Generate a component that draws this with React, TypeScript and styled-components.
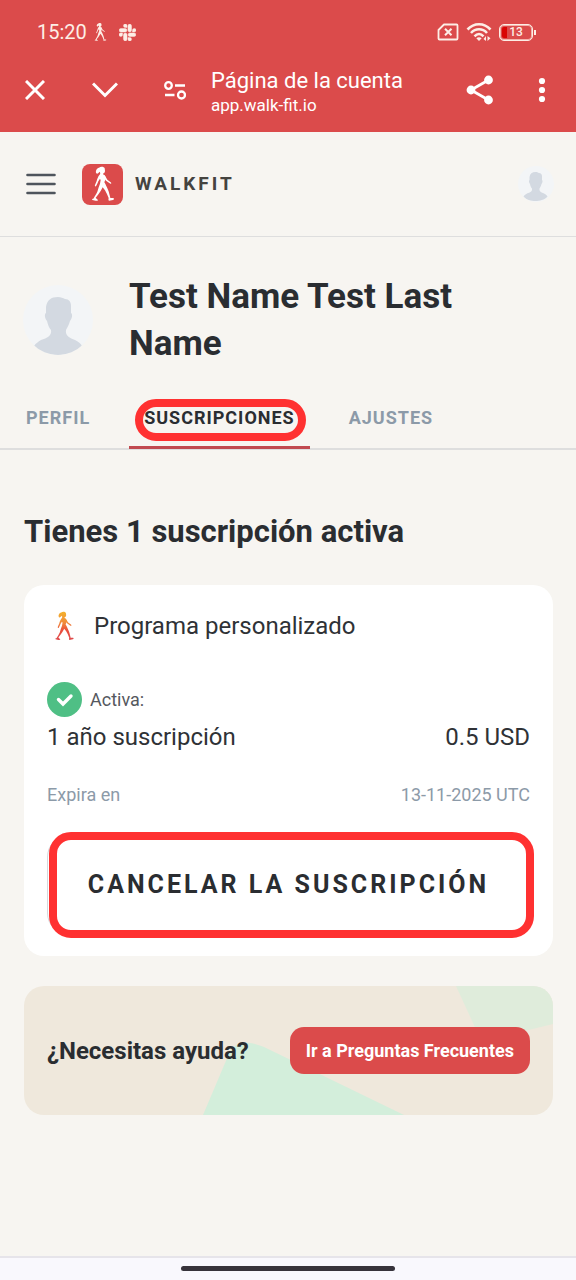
import React from "react";
import styled, { createGlobalStyle } from "styled-components";

const c = {
  red: "#db4b4b",
  mark: "#ff3131",
  page: "#f7f5f1",
  ink: "#2a2d31",
  body: "#2f3236",
  muted: "#8c9aa8",
  line: "#dedede",
  green: "#4fbf85",
  cream: "#fdeee6",
};

const GlobalStyle = createGlobalStyle`
  *, *::before, *::after { box-sizing: border-box; }
  body { margin: 0; background: ${c.page}; font-family: Roboto, "Liberation Sans", sans-serif; color: ${c.ink}; }
  h1, h2, h3, p, dl, dt, dd { margin: 0; font-weight: inherit; }
  a { color: inherit; text-decoration: none; }
  button { font: inherit; color: inherit; }
`;

const Page = styled.div`
  display: flex;
  flex-direction: column;
  min-height: 100vh;
`;

const BrowserChrome = styled.header`
  background: ${c.red};
  color: #fff;
  padding-bottom: 16px;
`;

const StatusBar = styled.div`
  display: flex;
  align-items: center;
  justify-content: space-between;
  height: 64px;
  padding: 0 40px 0 37px;
  color: ${c.cream};
`;

const StatusGroup = styled.div<{ $gap: number }>`
  display: flex;
  align-items: center;
  gap: ${(p) => p.$gap}px;
`;

const Clock = styled.time`
  font-size: 20px;
  line-height: 24px;
`;

const Notifications = styled.div`
  display: flex;
  align-items: center;
  gap: 12px;
`;

const Toolbar = styled.div`
  display: flex;
  align-items: center;
  height: 52px;
  padding: 0 20px 0 15px;
`;

const IconButton = styled.button<{ $width: number }>`
  display: flex;
  align-items: center;
  justify-content: center;
  flex: none;
  width: ${(p) => p.$width}px;
  height: 44px;
  padding: 0;
  border: 0;
  background: none;
  cursor: pointer;
`;

const ToolbarGroup = styled.div<{ $gap: number }>`
  display: flex;
  gap: ${(p) => p.$gap}px;
`;

const PageInfo = styled.div`
  flex: 1;
  min-width: 0;
  margin-left: 16px;
  padding-top: 4px;
`;

const PageTitle = styled.p`
  font-size: 22px;
  line-height: 26px;
`;

const PageUrl = styled.p`
  font-size: 17px;
  line-height: 22px;
`;

const SiteHeader = styled.div`
  display: flex;
  align-items: center;
  height: 105px;
  padding: 0 22px 0 20px;
  border-bottom: 1px solid ${c.line};
`;

const Brand = styled.a`
  display: flex;
  align-items: center;
  gap: 12px;
  margin: 0 auto 0 20px;
`;

const BrandTile = styled.span`
  display: block;
  width: 41px;
  height: 41px;
  border-radius: 8px;
  background: ${c.red};
`;

const BrandName = styled.span`
  font-size: 19px;
  line-height: 24px;
  font-weight: 700;
  letter-spacing: 3px;
  color: #45433f;
`;

const Avatar = styled.div<{ $size: number }>`
  flex: none;
  width: ${(p) => p.$size}px;
  height: ${(p) => p.$size}px;
  border-radius: 50%;
  overflow: hidden;
  background: #f3f5f7;
`;

const Profile = styled.section`
  display: flex;
  align-items: center;
  gap: 36px;
  padding: 36px 100px 24px 23px;
`;

const ProfileName = styled.h1`
  font-size: 35px;
  line-height: 47px;
  font-weight: 700;
`;

const Tabs = styled.nav`
  display: flex;
  gap: 24px;
  padding: 0 11px;
  border-bottom: 2px solid ${c.line};
`;

const Tab = styled.a<{ $active?: boolean }>`
  position: relative;
  padding: 15px 15px 16px;
  margin-bottom: -1px;
  border-bottom: 3px solid ${(p) => (p.$active ? "#c14a50" : "transparent")};
  font-size: 18px;
  line-height: 24px;
  font-weight: 700;
  letter-spacing: 1px;
  color: ${(p) => (p.$active ? c.ink : c.muted)};
`;

const Marker = styled.span<{ $inset: string; $radius: number }>`
  position: absolute;
  inset: ${(p) => p.$inset};
  border: 8px solid ${c.mark};
  border-radius: ${(p) => p.$radius}px;
  pointer-events: none;
`;

const Content = styled.main`
  display: flex;
  flex-direction: column;
  flex: 1;
  padding: 64px 23px 40px 24px;
`;

const SectionTitle = styled.h2`
  margin-bottom: 35px;
  font-size: 31px;
  line-height: 36px;
  font-weight: 700;
`;

const Card = styled.section`
  padding: 23px 23px 21px;
  border-radius: 20px;
  background: #fff;
`;

const CardHeading = styled.div`
  display: flex;
  align-items: center;
  gap: 12px;
  height: 36px;
  margin-bottom: 38px;
`;

const CardTitle = styled.h3`
  font-size: 24px;
  line-height: 36px;
  color: ${c.body};
`;

const Status = styled.p`
  display: flex;
  align-items: center;
  gap: 8px;
  font-size: 18px;
  line-height: 24px;
  color: #55585e;
`;

const Details = styled.dl`
  padding-bottom: 28px;
`;

const DetailRow = styled.div<{ $muted?: boolean }>`
  display: flex;
  justify-content: space-between;
  padding: ${(p) => (p.$muted ? "30px 0 0" : "4px 0 0")};
  font-size: ${(p) => (p.$muted ? 18 : 24)}px;
  line-height: ${(p) => (p.$muted ? 24 : 32)}px;
  color: ${(p) => (p.$muted ? c.muted : c.body)};
`;

const CancelButton = styled.button`
  position: relative;
  display: block;
  width: 100%;
  height: 100px;
  padding: 0;
  border: 1px solid #d5d8dc;
  border-radius: 22px;
  background: #fff;
  font-size: 25px;
  line-height: 32px;
  font-weight: 700;
  letter-spacing: 3px;
  color: ${c.ink};
  cursor: pointer;
`;

const HelpCard = styled.section`
  position: relative;
  display: flex;
  align-items: center;
  justify-content: space-between;
  height: 129px;
  margin-top: 30px;
  padding: 0 23px;
  border-radius: 20px;
  overflow: hidden;
  background: #efe8dc;
`;

const HelpShapes = styled.svg`
  position: absolute;
  inset: 0;
  width: 100%;
  height: 100%;
`;

const HelpTitle = styled.h2`
  position: relative;
  font-size: 24px;
  line-height: 32px;
  font-weight: 700;
`;

const FaqLink = styled.a`
  position: relative;
  padding: 12px 16px;
  border-radius: 14px;
  background: ${c.red};
  color: #fff;
  font-size: 18px;
  line-height: 23px;
  font-weight: 700;
`;

const GestureBar = styled.footer`
  display: flex;
  justify-content: center;
  height: 24px;
  padding-top: 8px;
  border-top: 2px solid #e6e4ea;
  background: #f9f8fd;
`;

const GesturePill = styled.span`
  width: 37%;
  height: 5px;
  border-radius: 3px;
  background: #37333b;
`;

type WalkerProps = { width: number; height: number; viewBox?: string; fill?: string };

function Walker({ width, height, viewBox = "26 6 74 108", fill = "currentColor" }: WalkerProps) {
  return (
    <svg width={width} height={height} viewBox={viewBox} display="block" aria-hidden="true">
      <defs>
        <linearGradient id="sunset" gradientUnits="userSpaceOnUse" x1="60" y1="8" x2="60" y2="112">
          <stop offset="0" stopColor="#f4b32c" />
          <stop offset="0.4" stopColor="#f08a3c" />
          <stop offset="0.65" stopColor="#ea4f3c" />
          <stop offset="1" stopColor="#dd4a4e" />
        </linearGradient>
      </defs>
      <g fill={fill}>
        <path d="M51 11C56 7 66 8 68 13L69 20C69 24 67 28 64 28L63 31L67 33C71 37 72 43 70 47L67 55C71 61 74 69 78 77C81 84 83 93 85 102L94 102C97 104 96 107 93 108L81 110C79 109 79 106 80 102C77 94 73 86 69 79L62 70L56 81C52 88 47 94 41 101C43 104 46 106 48 108C47 111 44 111 41 110L31 108C29 106 31 104 34 104C38 97 43 90 46 83C48 75 51 67 54 59L56 48C52 43 51 37 53 32L55 28L53 23C51 25 48 29 45 29C42 28 41 24 42 20C44 14 47 12 51 11Z" />
        <path d="M53 32C48 37 46 44 44 51L39 63C38 66 39 68 42 67C45 62 47 57 49 52L56 41Z" />
        <path d="M66 33C71 37 73 43 76 47L85 54C88 56 89 58 87 59C85 60 84 58 82 57L72 50L66 41Z" />
      </g>
    </svg>
  );
}

function Silhouette({ size }: { size: number }) {
  return (
    <svg width={size} height={size} viewBox="0 0 70 70" display="block" aria-hidden="true">
      <path
        fill="#d3d9e1"
        d="M35 12C38 12 40 13 42 14C46 14 48 17 48 21V28C50 29 49 34 47 36C46 40 44 43 43 45C42 51 47 53 52 55C56 57 58 59 59 61C53 68 43 70 35 70C26 70 17 68 11 61C13 58 15 57 18 55C24 53 29 51 28 45C26 43 25 40 24 36C22 34 21 29 23 28V22C24 15 28 12 35 12Z"
      />
    </svg>
  );
}

function SlackIcon() {
  return (
    <svg width="17" height="17" viewBox="0 0 24 24" fill="currentColor" stroke="currentColor" strokeWidth="0.600" aria-hidden="true">
      <path d="M5.04 15.17a2.53 2.53 0 1 1-2.52-2.53h2.52zM6.31 15.17a2.53 2.53 0 0 1 5.05 0v6.31a2.53 2.53 0 0 1-5.05 0zM8.83 5.04a2.53 2.53 0 1 1 2.53-2.52v2.52zM8.83 6.31a2.53 2.53 0 0 1 0 5.05H2.52a2.53 2.53 0 0 1 0-5.05zM18.96 8.83a2.53 2.53 0 1 1 2.52 2.53h-2.52zM17.69 8.83a2.53 2.53 0 0 1-5.05 0V2.52a2.53 2.53 0 0 1 5.05 0zM15.17 18.96a2.53 2.53 0 1 1-2.53 2.52v-2.52zM15.17 17.69a2.53 2.53 0 0 1 0-5.05h6.31a2.53 2.53 0 0 1 0 5.05z" />
    </svg>
  );
}

function SimOffIcon() {
  return (
    <svg width="22" height="18" viewBox="0 0 22 18" fill="none" stroke="currentColor" aria-hidden="true">
      <path d="M7 1.500H19.500Q20.500 1.500 20.500 2.500V15.500Q20.500 16.500 19.500 16.500H2.500Q1.500 16.500 1.500 15.500V7Z" strokeWidth="1.800" strokeLinejoin="round" />
      <path d="M8 5.800L14.500 12.200M14.500 5.800L8 12.200" strokeWidth="2" />
    </svg>
  );
}

function WifiIcon() {
  return (
    <svg width="26" height="20" viewBox="0 0 26 20" fill="none" stroke="currentColor" strokeWidth="2.600" aria-hidden="true">
      <path d="M1.500 7.500C8 .4 18 .4 24.500 7.500" />
      <path d="M5 11C9.500 6 16.500 6 21 11" />
      <path d="M8.500 14.300C11.300 11.300 14.700 11.300 17.500 14.300" />
      <path d="M10.300 16.200Q13 14.200 15.700 16.200L13 19Z" fill="currentColor" stroke="none" />
      <path d="M20 14V19L17.500 17ZM21.500 19V14L24.500 16.200Z" fill="currentColor" stroke="none" />
    </svg>
  );
}

const Battery = styled.span`
  position: relative;
  display: flex;
  align-items: center;
  justify-content: center;
  width: 34px;
  height: 17px;
  margin-right: 3px;
  border: 1px solid ${c.cream};
  border-radius: 5px;
  font-size: 12px;
  line-height: 15px;
  font-weight: 500;
  box-shadow: inset 0 0 0 1px #f3b3ac;
  &::before {
    content: "";
    position: absolute;
    left: 2px;
    top: 2px;
    width: 5px;
    height: 11px;
    border-radius: 2px 0 0 2px;
    background: #d90404;
  }
  &::after {
    content: "";
    position: absolute;
    right: -4px;
    top: 5px;
    width: 2px;
    height: 5px;
    background: ${c.cream};
  }
`;

export default function App() {
  return (
    <>
      <GlobalStyle />
      <Page>
        <BrowserChrome>
          <StatusBar>
            <StatusGroup $gap={7}>
              <Clock>15:20</Clock>
              <Notifications>
                <Walker width={13} height={20} />
                <SlackIcon />
              </Notifications>
            </StatusGroup>
            <StatusGroup $gap={7}>
              <SimOffIcon />
              <WifiIcon />
              <Battery>13</Battery>
            </StatusGroup>
          </StatusBar>
          <Toolbar>
            <ToolbarGroup $gap={30}>
              <IconButton $width={40} aria-label="Cerrar">
                <svg width="20" height="20" viewBox="0 0 20 20" fill="none" stroke="currentColor" strokeWidth="3">
                  <path d="M1 1L19 19M19 1L1 19" />
                </svg>
              </IconButton>
              <IconButton $width={40} aria-label="Minimizar">
                <svg width="26" height="16" viewBox="0 0 26 16" fill="none" stroke="currentColor" strokeWidth="3">
                  <path d="M1 1.500L13 13.500L25 1.500" />
                </svg>
              </IconButton>
              <IconButton $width={40} aria-label="Información del sitio">
                <svg width="22" height="19" viewBox="0 0 22 19" fill="none" stroke="currentColor" strokeWidth="2.300">
                  <circle cx="4.500" cy="4.500" r="3.300" />
                  <path d="M11 4.500H21M1 14H10.500" />
                  <circle cx="17.500" cy="14" r="3.500" />
                </svg>
              </IconButton>
            </ToolbarGroup>
            <PageInfo>
              <PageTitle>Página de la cuenta</PageTitle>
              <PageUrl>app.walk-fit.io</PageUrl>
            </PageInfo>
            <ToolbarGroup $gap={34}>
              <IconButton $width={28} aria-label="Compartir">
                <svg width="28" height="30" viewBox="0 0 28 30" fill="currentColor">
                  <path d="M22.500 5L5 15L22.500 25" fill="none" stroke="currentColor" strokeWidth="2.800" />
                  <circle cx="22.500" cy="5" r="4.400" />
                  <circle cx="5" cy="15" r="4.400" />
                  <circle cx="22.500" cy="25" r="4.400" />
                </svg>
              </IconButton>
              <IconButton $width={28} aria-label="Más opciones">
                <svg width="8" height="26" viewBox="0 0 8 26" fill="currentColor">
                  <circle cx="4" cy="4" r="3.100" />
                  <circle cx="4" cy="13" r="3.100" />
                  <circle cx="4" cy="22" r="3.100" />
                </svg>
              </IconButton>
            </ToolbarGroup>
          </Toolbar>
        </BrowserChrome>

        <SiteHeader>
          <IconButton $width={42} aria-label="Menú">
            <svg width="30" height="22" viewBox="0 0 30 22" stroke="#4e545c" strokeWidth="2.600" strokeLinecap="round">
              <path d="M1.500 2H28.500M1.500 11H28.500M1.500 20H28.500" />
            </svg>
          </IconButton>
          <Brand href="#inicio">
            <BrandTile>
              <Walker width={41} height={41} viewBox="0 0 123 123" fill="#fff" />
            </BrandTile>
            <BrandName>WALKFIT</BrandName>
          </Brand>
          <Avatar $size={36}>
            <Silhouette size={35} />
          </Avatar>
        </SiteHeader>

        <Profile>
          <Avatar $size={70}>
            <Silhouette size={70} />
          </Avatar>
          <ProfileName>Test Name Test Last Name</ProfileName>
        </Profile>

        <Tabs>
          <Tab href="#perfil">PERFIL</Tab>
          <Tab href="#suscripciones" $active aria-current="page">
            SUSCRIPCIONES
            <Marker $inset="8px 4px 5px 6px" $radius={21} />
          </Tab>
          <Tab href="#ajustes">AJUSTES</Tab>
        </Tabs>

        <Content>
          <SectionTitle>Tienes 1 suscripción activa</SectionTitle>
          <Card>
            <CardHeading>
              <Walker width={35} height={30} fill="url(#sunset)" />
              <CardTitle>Programa personalizado</CardTitle>
            </CardHeading>
            <Status>
              <svg width="35" height="35" viewBox="0 0 35 35" aria-hidden="true">
                <circle cx="17.500" cy="17.500" r="17.500" fill={c.green} />
                <path d="M11.500 17.500L16 22L24 14" fill="none" stroke="#fff" strokeWidth="3.400" strokeLinecap="round" />
              </svg>
              Activa:
            </Status>
            <Details>
              <DetailRow>
                <dt>1 año suscripción</dt>
                <dd>0.5 USD</dd>
              </DetailRow>
              <DetailRow $muted>
                <dt>Expira en</dt>
                <dd>13-11-2025 UTC</dd>
              </DetailRow>
            </Details>
            <CancelButton type="button">
              CANCELAR LA SUSCRIPCIÓN
              <Marker $inset="-4px -5px -4px 1px" $radius={22} />
            </CancelButton>
          </Card>

          <HelpCard>
            <HelpShapes viewBox="0 0 529 129" preserveAspectRatio="xMaxYMid slice" aria-hidden="true">
              <path fill="#d3eedb" d="M179 129L204 70Q210 55 226 57Q233 58 240 61L380 129Z" />
              <path fill="#dfecdb" d="M432 0H529V38L464 54Q458 55 455 50Z" />
            </HelpShapes>
            <HelpTitle>¿Necesitas ayuda?</HelpTitle>
            <FaqLink href="#preguntas">Ir a Preguntas Frecuentes</FaqLink>
          </HelpCard>
        </Content>

        <GestureBar>
          <GesturePill />
        </GestureBar>
      </Page>
    </>
  );
}
